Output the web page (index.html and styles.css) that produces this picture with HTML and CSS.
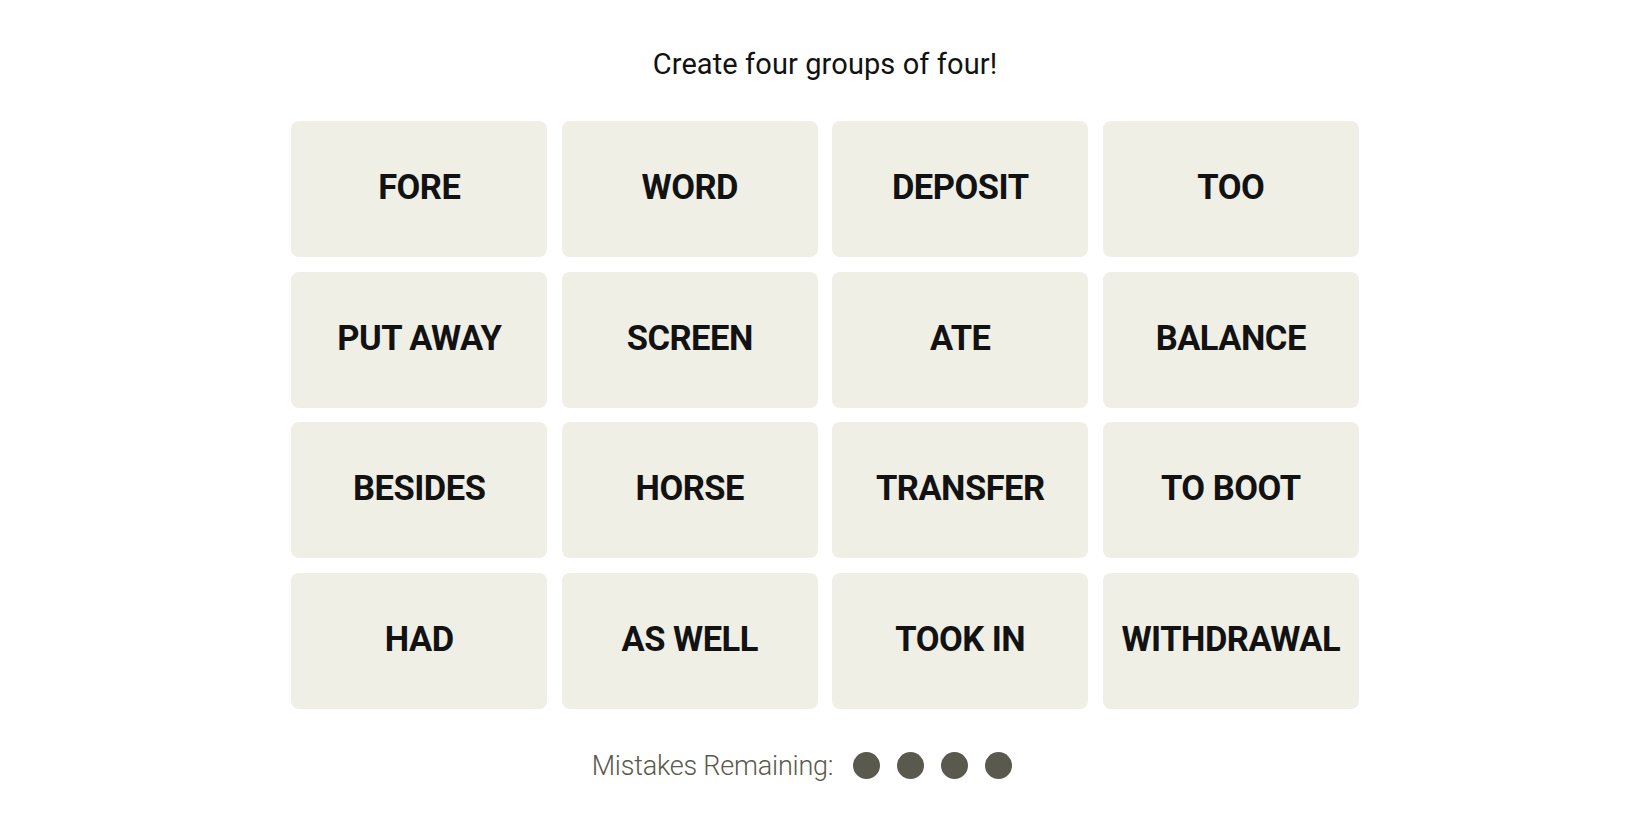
FILE: index.html
```html
<!DOCTYPE html>
<html>
<head>
<meta charset="utf-8">
<link rel="stylesheet" href="styles.css">
</head>
<body>
<main class="game">
  <p class="prompt">Create four groups of four!</p>
  <div class="board">
    <div class="tile">FORE</div>
    <div class="tile">WORD</div>
    <div class="tile">DEPOSIT</div>
    <div class="tile">TOO</div>
    <div class="tile">PUT AWAY</div>
    <div class="tile">SCREEN</div>
    <div class="tile">ATE</div>
    <div class="tile">BALANCE</div>
    <div class="tile">BESIDES</div>
    <div class="tile">HORSE</div>
    <div class="tile">TRANSFER</div>
    <div class="tile">TO BOOT</div>
    <div class="tile">HAD</div>
    <div class="tile">AS WELL</div>
    <div class="tile">TOOK IN</div>
    <div class="tile">WITHDRAWAL</div>
  </div>
  <div class="mistakes">
    <span class="mistakes-label">Mistakes Remaining:</span>
    <span class="dots">
      <span class="dot"></span>
      <span class="dot"></span>
      <span class="dot"></span>
      <span class="dot"></span>
    </span>
  </div>
</main>
</body>
</html>
```

FILE: styles.css
```css
* { box-sizing: border-box; }
html, body {
  margin: 0;
  padding: 0;
  background: #ffffff;
}
body {
  font-family: Roboto, "Liberation Sans", Arial, sans-serif;
  color: #121212;
}
.game {
  display: flex;
  flex-direction: column;
  align-items: center;
  padding-top: 45px;
}
.prompt {
  margin: 0;
  font-size: 29px;
  line-height: 38px;
  font-weight: 400;
  letter-spacing: 0.1px;
  color: #121212;
}
.board {
  margin-top: 38px;
  display: grid;
  grid-template-columns: repeat(4, 256px);
  grid-auto-rows: 136px;
  column-gap: 14.5px;
  row-gap: 14.5px;
}
.tile {
  background: #efefe6;
  border-radius: 8px;
  display: flex;
  align-items: center;
  justify-content: center;
  padding-bottom: 4px;
  font-size: 34.5px;
  font-weight: 700;
  letter-spacing: -0.5px;
  color: #121212;
}
.mistakes {
  margin-top: 41px;
  display: flex;
  align-items: center;
  padding-right: 46px;
}
.mistakes-label {
  font-size: 27px;
  font-weight: 300;
  color: #5a594e;
  letter-spacing: -0.2px;
}
.dots {
  display: flex;
  gap: 17px;
  margin-left: 20px;
}
.dot {
  width: 27px;
  height: 27px;
  border-radius: 50%;
  background: #5a594e;
}
```
